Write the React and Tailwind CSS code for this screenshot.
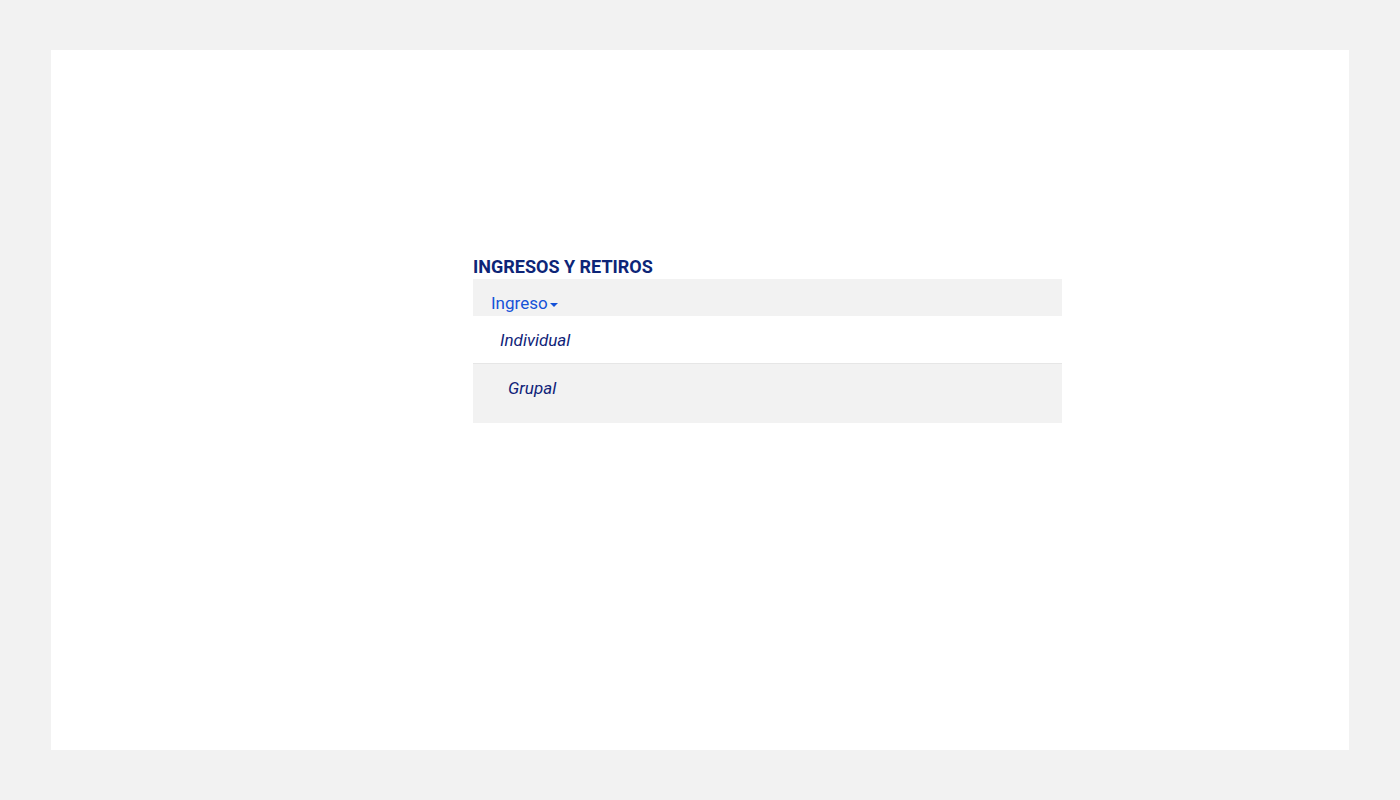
export default function App() {
  const font = { fontFamily: 'Roboto, "Liberation Sans", Arial, sans-serif' };
  return (
    <div className="min-h-screen bg-[#f2f2f2] py-[50px] px-[51px]" style={font}>
      <div className="h-[700px] bg-white pl-[422px]">
        <div className="w-[589px] pt-[208px]">
          <h1 className="text-[18px] leading-[17px] font-bold text-[#0d2577] h-[21px]">INGRESOS Y RETIROS</h1>
          <div className="bg-[#f2f2f2] h-[37px] pl-[18px] pt-[14px]">
            <button className="text-[17px] leading-[20px] text-[#1552d8] flex items-end">
              Ingreso
              <svg width="10" height="6" viewBox="0 0 10 6" className="mb-[5px] ml-[1px]"><path d="M1 1h8L5 5z" fill="#1552d8" /></svg>
            </button>
          </div>
          <div className="h-[48px] border-b border-[#e6e6e6] pl-[27px] pt-[13px]">
            <span className="italic text-[17px] leading-[20px] text-[#0f2379]">Individual</span>
          </div>
          <div className="bg-[#f2f2f2] h-[59px] pl-[35px] pt-[13px]">
            <span className="italic text-[17px] leading-[20px] text-[#0f2379]">Grupal</span>
          </div>
        </div>
      </div>
    </div>
  );
}
